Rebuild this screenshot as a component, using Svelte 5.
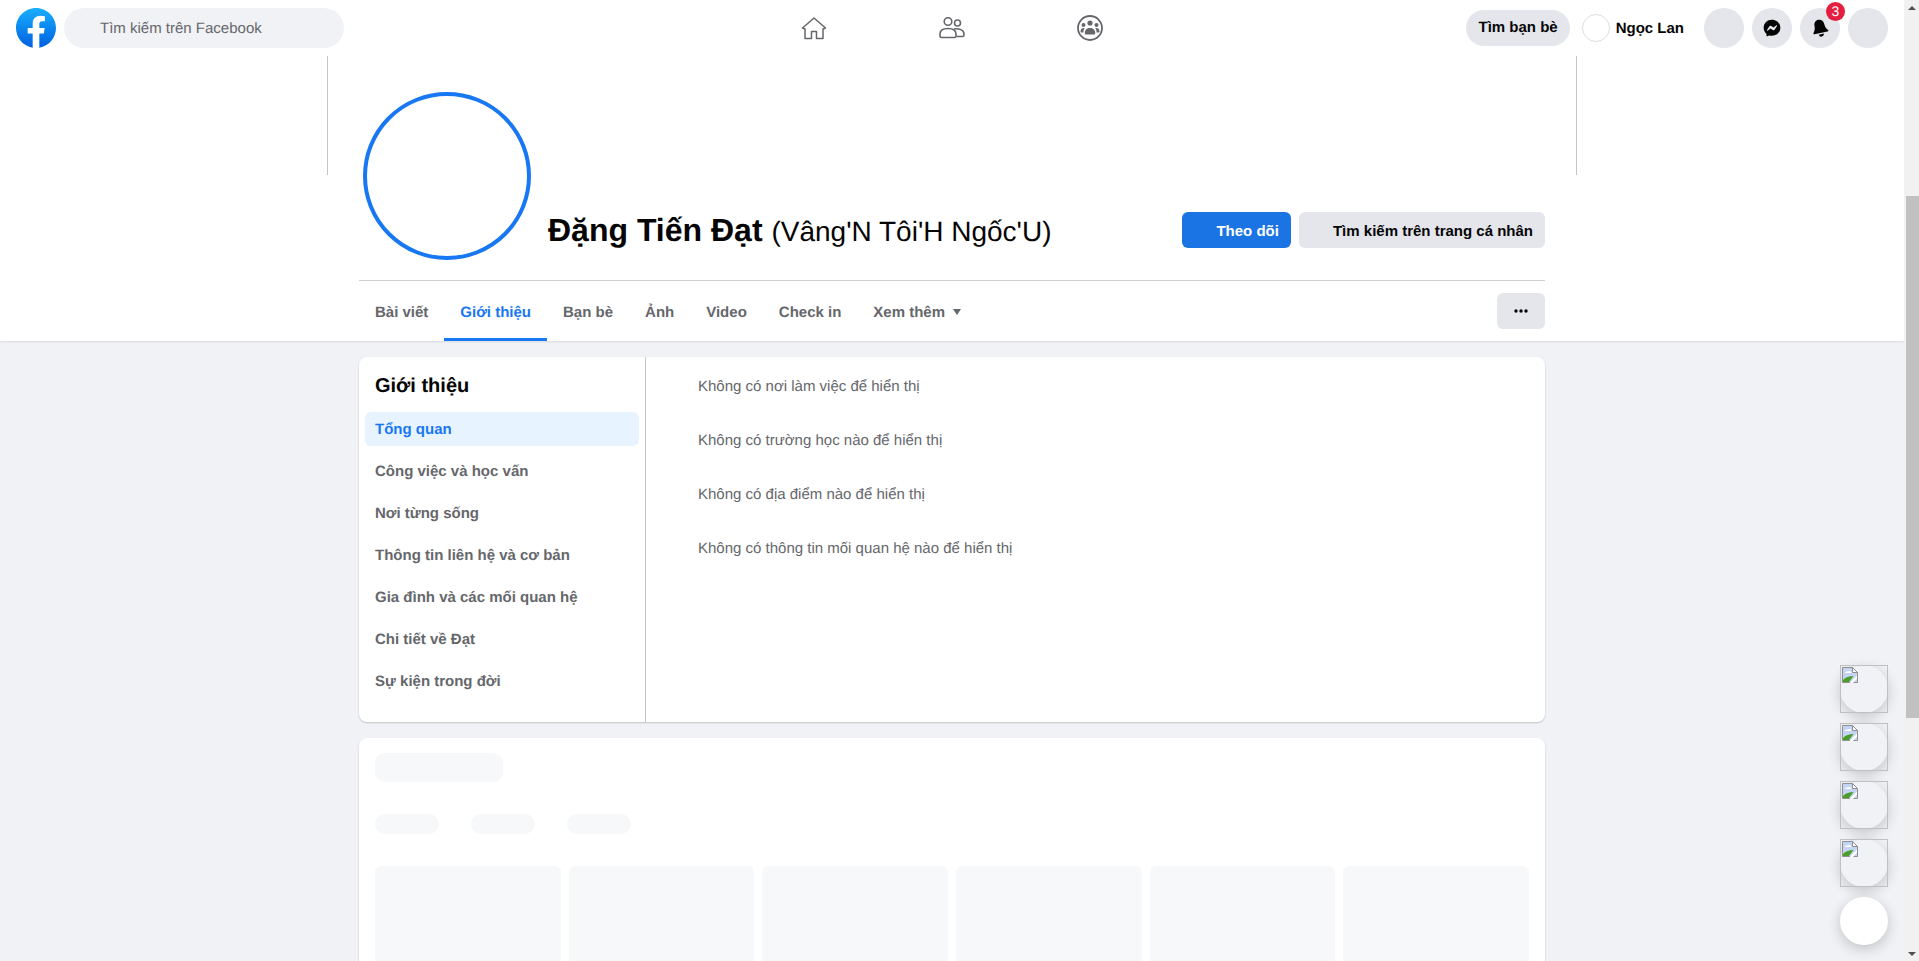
<script>
  const tabs = ['Bài viết', 'Giới thiệu', 'Bạn bè', 'Ảnh', 'Video', 'Check in'];
  const sections = [
    'Tổng quan',
    'Công việc và học vấn',
    'Nơi từng sống',
    'Thông tin liên hệ và cơ bản',
    'Gia đình và các mối quan hệ',
    'Chi tiết về Đạt',
    'Sự kiện trong đời'
  ];
  const emptyRows = [
    'Không có nơi làm việc để hiển thị',
    'Không có trường học nào để hiển thị',
    'Không có địa điểm nào để hiển thị',
    'Không có thông tin mối quan hệ nào để hiển thị'
  ];
</script>

<div class="page">
  <div class="main">
    <header class="topbar">
      <div class="top-left">
        <svg class="logo" viewBox="0 0 36 36">
          <defs>
            <linearGradient id="fb" x1="50%" x2="50%" y1="97%" y2="0%">
              <stop offset="0%" stop-color="#0062e0" />
              <stop offset="100%" stop-color="#19afff" />
            </linearGradient>
          </defs>
          <path fill="url(#fb)" d="M15 35.8C6.5 34.3 0 26.9 0 18 0 8.1 8.1 0 18 0s18 8.1 18 18c0 8.9-6.5 16.3-15 17.8l-1-.8h-4l-1 .8z" />
          <path fill="#fff" d="M25 23l.8-5H21v-3.500c0-1.400.5-2.500 2.700-2.500H26V7.400c-1.300-.2-2.700-.4-4-.4-4.100 0-7 2.500-7 7v4h-4.500v5H15v12.700c1 .2 2 .3 3 .3s2-.1 3-.3V23h4z" />
        </svg>
        <div class="search">Tìm kiếm trên Facebook</div>
      </div>

      <nav class="top-center">
        <div class="top-tab">
          <svg width="26" height="24" viewBox="0 0 26 24" fill="none" stroke="#65676b" stroke-width="1.5" stroke-linejoin="round">
            <path d="M13 2 L24.500 12 L22 13 V22.500 H15.500 V15.500 H10.500 V22.500 H4 V13 L1.500 12 Z" />
          </svg>
        </div>
        <div class="top-tab">
          <svg width="26" height="22" viewBox="0 0 26 22" fill="none" stroke="#65676b" stroke-width="1.6" stroke-linejoin="round">
            <circle cx="9" cy="4.500" r="3.800" />
            <circle cx="18.500" cy="6" r="3" />
            <path d="M1 17 C1 13 5 11.500 9 11.500 S17 13 17 17 V19 Q17 20.500 15.500 20.500 H2.500 Q1 20.500 1 19 Z" />
            <path d="M15 12 C20 11 25 13 25 17 V18 Q25 19.500 23.500 19.500 H17.500" />
          </svg>
        </div>
        <div class="top-tab">
          <svg width="26" height="26" viewBox="0 0 26 26" fill="#65676b">
            <circle cx="13" cy="13" r="12" fill="none" stroke="#65676b" stroke-width="1.800" />
            <circle cx="13" cy="8" r="2.600" />
            <circle cx="6.500" cy="10" r="2" />
            <circle cx="19.500" cy="10" r="2" />
            <path d="M7.800 18.500 c0-4 2.200-5.500 5.200-5.500 s5.200 1.500 5.200 5.500 q0 1-1 1 H8.800 q-1 0-1-1z" />
            <path d="M3.500 16.500 c0-2.500 1.500-3.500 3.200-3.500 .4 0 .8.100 1 .2 -.9 1-1.300 2.400-1.300 4.300 H4.500 q-1 0-1-1z" />
            <path d="M22.500 16.500 c0-2.500-1.500-3.500-3.200-3.500 -.4 0-.8.100-1 .2 .9 1 1.300 2.400 1.300 4.300 H21.500 q1 0 1-1z" />
          </svg>
        </div>
      </nav>

      <div class="top-right">
        <div class="find-friends">Tìm bạn bè</div>
        <div class="me">
          <span class="me-avatar"></span>
          <span class="me-name">Ngọc Lan</span>
        </div>
        <div class="round"></div>
        <div class="round">
          <svg width="20" height="20" viewBox="0 0 24 24" fill="#050505" fill-rule="evenodd">
            <path d="M12 2C6.360 2 2 6.130 2 11.700c0 2.910 1.190 5.440 3.140 7.170.160.140.260.350.270.570l.050 1.780c.020.570.610.940 1.130.710l1.980-.870c.170-.080.360-.090.540-.050.910.250 1.870.390 2.890.390 5.640 0 10-4.130 10-9.700S17.640 2 12 2zm6 7.460-2.940 4.660c-.470.740-1.470.930-2.170.400l-2.340-1.750a.600.600 0 0 0-.720 0l-3.160 2.400c-.420.320-.970-.180-.690-.630l2.940-4.660c.470-.740 1.470-.930 2.170-.400l2.340 1.750c.210.160.510.160.720 0l3.160-2.400c.420-.320.970.180.690.630z" />
          </svg>
        </div>
        <div class="round bell">
          <svg width="20" height="20" viewBox="0 0 24 24" fill="#050505">
            <g transform="rotate(-12 12 12)">
              <path d="M12 2C8 2 6 5 6 9C6 13 4 15 3 16.500C2.500 17.500 3 18 4 18H20C21 18 21.500 17.500 21 16.500C20 15 18 13 18 9C18 5 16 2 12 2Z" />
              <path d="M9 19.500a3 3 0 0 0 6 0Z" />
            </g>
          </svg>
          <span class="badge">3</span>
        </div>
        <div class="round"></div>
      </div>
    </header>

    <section class="profile">
      <div class="cover"></div>
      <div class="profile-inner">
        <div class="head">
          <div class="avatar"></div>
          <h1 class="name">Đặng Tiến Đạt <span class="alt">(Vâng'N Tôi'H Ngốc'U)</span></h1>
          <div class="actions">
            <button class="btn primary">Theo dõi</button>
            <button class="btn">Tìm kiếm trên trang cá nhân</button>
          </div>
        </div>
        <div class="tabs">
          {#each tabs as tab}
            <div class="tab" class:active={tab === 'Giới thiệu'}>{tab}</div>
          {/each}
          <div class="tab">Xem thêm<span class="caret"></span></div>
          <button class="btn more">
            <svg width="14" height="4" viewBox="0 0 14 4" fill="#050505">
              <circle cx="2" cy="2" r="1.700" />
              <circle cx="7" cy="2" r="1.700" />
              <circle cx="12" cy="2" r="1.700" />
            </svg>
          </button>
        </div>
      </div>
    </section>

    <div class="content">
      <section class="card about">
        <aside class="about-nav">
          <h2>Giới thiệu</h2>
          <ul>
            {#each sections as item, i}
              <li class:current={i === 0}>{item}</li>
            {/each}
          </ul>
        </aside>
        <div class="about-body">
          {#each emptyRows as row}
            <p>{row}</p>
          {/each}
        </div>
      </section>

      <section class="card loading">
        <div class="sk sk-title"></div>
        <div class="sk-pills">
          <div class="sk sk-pill"></div>
          <div class="sk sk-pill"></div>
          <div class="sk sk-pill"></div>
        </div>
        <div class="sk-grid">
          {#each Array(6) as _}
            <div class="sk sk-tile"></div>
          {/each}
        </div>
      </section>
    </div>
  </div>

  <div class="scrollbar">
    <span class="arrow up"></span>
    <div class="track"><div class="thumb"></div></div>
    <span class="arrow down"></span>
  </div>
</div>

<div class="bubbles">
  {#each Array(4) as _}
    <div class="bubble broken">
      <svg class="broken-img" width="16" height="16" viewBox="0 0 16 16">
        <path d="M.5.500H10.500L15.500 5.500V15.500H.5Z" fill="#c3d4f4" stroke="#8f8f8f" />
        <path d="M10.500.500V5.500H15.500Z" fill="#fff" stroke="#8f8f8f" />
        <path d="M3 6c0-1 1-1.500 2-1.500s1.500-.5 2.500-.5 2 1 2 2z" fill="#fff" />
        <path d="M1 15V13C4 10 7 9 11.500 9L7 15Z" fill="#4a9e28" />
        <path d="M7.500 16L15 8.500V11.500L11 16Z" fill="#fff" />
      </svg>
    </div>
  {/each}
  <div class="bubble white"></div>
</div>

<style>
  :global(body) {
    overflow: hidden;
    background: #f0f2f5;
    font-family: "Liberation Sans", Arial, sans-serif;
    color: #050505;
    text-rendering: geometricPrecision;
  }

  .page {
    display: flex;
    height: 961px;
    overflow: hidden;
  }

  .main {
    flex: 1;
    min-width: 0;
  }

  /* top bar */
  .topbar {
    display: grid;
    grid-template-columns: 1fr auto 1fr;
    align-items: center;
    height: 56px;
    background: #fff;
  }

  .top-left {
    display: flex;
    align-items: center;
    gap: 8px;
    padding-left: 16px;
  }

  .logo {
    width: 40px;
    height: 40px;
  }

  .search {
    width: 244px;
    height: 40px;
    padding-left: 36px;
    border-radius: 20px;
    background: #f0f2f5;
    color: #65676b;
    font-size: 15px;
    line-height: 42px;
  }

  .top-center {
    display: flex;
  }

  .top-tab {
    display: flex;
    align-items: center;
    justify-content: center;
    width: 138px;
    height: 56px;
  }

  .top-right {
    display: flex;
    align-items: center;
    justify-content: flex-end;
    gap: 8px;
    padding-right: 16px;
  }

  .find-friends {
    margin-right: 4px;
    padding: 0 12px;
    height: 36px;
    border-radius: 18px;
    background: #e4e6eb;
    font-size: 15px;
    font-weight: 700;
    line-height: 36px;
  }

  .me {
    display: flex;
    align-items: center;
    gap: 6px;
    margin-right: 12px;
  }

  .me-avatar {
    width: 26px;
    height: 26px;
    border: 1px solid #dddfe2;
    border-radius: 50%;
    background: #fff;
  }

  .me-name {
    font-size: 15px;
    font-weight: 700;
  }

  .round {
    position: relative;
    display: flex;
    align-items: center;
    justify-content: center;
    width: 40px;
    height: 40px;
    border-radius: 50%;
    background: #e4e6eb;
  }

  .badge {
    position: absolute;
    top: -6px;
    right: -5px;
    width: 19px;
    height: 19px;
    border-radius: 50%;
    background: #e41e3f;
    color: #fff;
    font-size: 14px;
    line-height: 19px;
    text-align: center;
  }

  /* profile header */
  .profile {
    background: #fff;
    box-shadow: 0 1px 2px rgba(0, 0, 0, 0.1);
  }

  .cover {
    box-sizing: border-box;
    width: 1250px;
    height: 119px;
    margin: 0 auto;
    border-left: 1px solid #c4c4c4;
    border-right: 1px solid #c4c4c4;
  }

  .profile-inner {
    width: 1186px;
    margin: 0 auto;
  }

  .head {
    display: flex;
    align-items: flex-start;
    height: 106px;
    border-bottom: 1px solid #ced0d4;
    box-sizing: border-box;
  }

  .avatar {
    flex: none;
    box-sizing: border-box;
    width: 168px;
    height: 168px;
    margin: -83px 17px 0 4px;
    border: 4px solid #1877f2;
    border-radius: 50%;
    background: #fff;
  }

  .name {
    margin: 36px 0 0;
    font-size: 32px;
    font-weight: 700;
    line-height: 38px;
    white-space: nowrap;
  }

  .alt {
    font-size: 28px;
    font-weight: 400;
  }

  .actions {
    display: flex;
    gap: 8px;
    margin: 37px 0 0 auto;
  }

  .btn {
    height: 36px;
    padding: 0 12px 0 34px;
    border: 0;
    border-radius: 6px;
    background: #e4e6eb;
    color: #050505;
    font-family: inherit;
    font-size: 15px;
    font-weight: 700;
  }

  .primary {
    background: #1b74e4;
    color: #fff;
  }

  .tabs {
    display: flex;
    align-items: stretch;
    height: 60px;
  }

  .tab {
    display: flex;
    align-items: center;
    gap: 8px;
    padding: 2px 16px 0;
    color: #65676b;
    font-size: 15px;
    font-weight: 700;
    white-space: pre;
  }

  .tab.active {
    color: #1877f2;
    box-shadow: inset 0 -3px 0 #1877f2;
  }

  .caret {
    width: 0;
    height: 0;
    border: 4.5px solid transparent;
    border-top: 6px solid #65676b;
    border-bottom: 0;
  }

  .more {
    display: flex;
    align-items: center;
    justify-content: center;
    align-self: center;
    width: 48px;
    margin-left: auto;
    padding: 0;
  }

  /* content */
  .content {
    display: flex;
    flex-direction: column;
    gap: 16px;
    width: 1186px;
    margin: 0 auto;
    padding-top: 16px;
  }

  .card {
    border-radius: 8px;
    background: #fff;
    box-shadow: 0 1px 2px rgba(0, 0, 0, 0.2);
  }

  .about {
    display: flex;
    height: 365px;
  }

  .about-nav {
    box-sizing: border-box;
    flex: none;
    width: 287px;
    padding: 0 6px;
    border-right: 1px solid #c4c4c4;
  }

  .about-nav h2 {
    margin: 17px 0 14px 10px;
    font-size: 20px;
    font-weight: 700;
    line-height: 24px;
  }

  .about-nav ul {
    display: flex;
    flex-direction: column;
    gap: 8px;
    margin: 0;
    padding: 0;
    list-style: none;
  }

  .about-nav li {
    height: 34px;
    padding-left: 10px;
    border-radius: 6px;
    color: #65676b;
    font-size: 15px;
    font-weight: 700;
    line-height: 36px;
  }

  .about-nav li.current {
    background: #e7f3ff;
    color: #1877f2;
  }

  .about-body {
    display: flex;
    flex-direction: column;
    gap: 36px;
    padding: 21px 0 0 52px;
    color: #65676b;
    font-size: 15px;
  }

  .about-body p {
    margin: 0;
    line-height: 18px;
  }

  .loading {
    height: 400px;
    padding: 15px 16px;
    box-sizing: border-box;
  }

  .sk {
    background: #f7f8fa;
  }

  .sk-title {
    width: 128px;
    height: 29px;
    border-radius: 10px;
  }

  .sk-pills {
    display: flex;
    gap: 32px;
    margin-top: 32px;
  }

  .sk-pill {
    width: 64px;
    height: 20px;
    border-radius: 10px;
  }

  .sk-grid {
    display: grid;
    grid-template-columns: repeat(6, 1fr);
    gap: 8px;
    margin-top: 32px;
  }

  .sk-tile {
    height: 186px;
    border-radius: 6px;
  }

  /* scrollbar */
  .scrollbar {
    display: flex;
    flex-direction: column;
    flex: none;
    width: 15px;
    height: 961px;
    background: #f1f1f1;
  }

  .arrow {
    flex: none;
    display: flex;
    align-items: center;
    justify-content: center;
    height: 15px;
  }

  .arrow::before {
    content: "";
    border: 4px solid transparent;
  }

  .up::before {
    border-top: 0;
    border-bottom: 4px solid #505050;
  }

  .down::before {
    border-bottom: 0;
    border-top: 4px solid #505050;
  }

  .track {
    flex: 1;
    padding-top: 181px;
  }

  .thumb {
    height: 522px;
    margin-left: 2px;
    background: #c1c1c1;
  }

  /* chat bubbles, fixed over the page */
  .bubbles {
    position: fixed;
    top: 665px;
    left: 1840px;
    display: flex;
    flex-direction: column;
    gap: 10px;
  }

  .bubble {
    position: relative;
    width: 48px;
    height: 48px;
    border-radius: 50%;
    box-shadow: 0 4px 14px rgba(0, 0, 0, 0.2);
  }

  .broken {
    background: #f0f2f5;
  }

  .broken::after {
    content: "";
    position: absolute;
    inset: 0;
    border: 1px solid #c0c0c0;
  }

  .broken-img {
    position: absolute;
    top: 2px;
    left: 2px;
  }

  .white {
    background: #fff;
  }
</style>
